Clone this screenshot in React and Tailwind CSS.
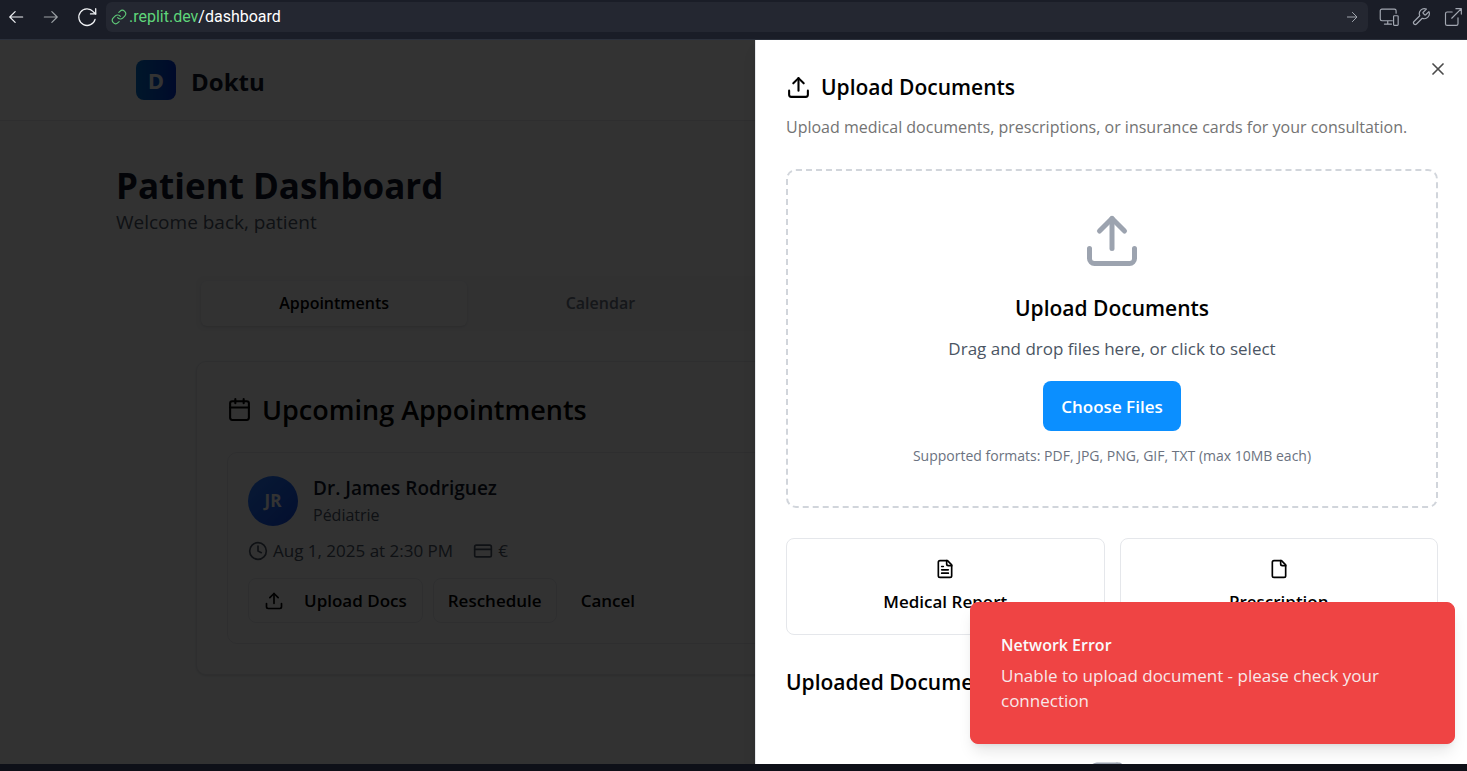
import React from "react";
import { Upload, Calendar, Clock, CreditCard, X } from "lucide-react";

function Glyph({ size = 20, strokeWidth = 2, className = "", children }) {
  return (
    <svg
      width={size}
      height={size}
      viewBox="0 0 24 24"
      fill="none"
      stroke="currentColor"
      strokeWidth={strokeWidth}
      strokeLinecap="round"
      strokeLinejoin="round"
      className={className}
      aria-hidden="true"
    >
      {children}
    </svg>
  );
}

function FileGlyph({ size, lines = false, className }) {
  return (
    <Glyph size={size} className={className}>
      <path d="M15 2H6a2 2 0 0 0-2 2v16a2 2 0 0 0 2 2h12a2 2 0 0 0 2-2V7Z" />
      <path d="M14 2v4a2 2 0 0 0 2 2h4" />
      {lines && <path d="M10 9H8M16 13H8M16 17H8" />}
    </Glyph>
  );
}

function BrowserBar() {
  return (
    <nav
      aria-label="Browser"
      className="flex h-10 shrink-0 items-start border-b border-[#2b303b] bg-[#1a1d27] pt-0.5 text-[#c2c8cc]"
    >
      <div className="flex h-[30px] items-center gap-[15px] pl-1.5">
        <button type="button" aria-label="Back" className="text-[#f0f2f5]">
          <Glyph strokeWidth={1.4}>
            <path d="M20 12H4.500M11 5.500 4.500 12l6.500 6.500" />
          </Glyph>
        </button>
        <button type="button" aria-label="Forward" className="text-[#9da2a6]">
          <Glyph strokeWidth={1.4}>
            <path d="M4 12h15.500M13 5.500l6.500 6.500-6.500 6.500" />
          </Glyph>
        </button>
        <button type="button" aria-label="Reload" className="text-[#f0f2f5]">
          <Glyph size={22} strokeWidth={1.4}>
            <path d="M20.800 14.500A9 9 0 1 1 18.800 6.200L21.500 8.700" />
            <path d="M21.500 3v5.700h-5.700" />
          </Glyph>
        </button>
      </div>
      <div className="ml-2 flex h-[30px] min-w-0 flex-1 items-center rounded-md bg-[#242731] pl-[5px] pr-1.5 font-['Roboto',sans-serif] text-[16px] leading-5">
        <Glyph size={16} strokeWidth={1.7} className="mr-0.5 text-[#5fc878]">
          <path d="M10 13a5 5 0 0 0 7.540.540l3-3a5 5 0 0 0-7.070-7.070l-1.720 1.710" />
          <path d="M14 11a5 5 0 0 0-7.540-.540l-3 3a5 5 0 0 0 7.070 7.070l1.710-1.710" />
        </Glyph>
        <span className="text-[#5fd57a]">.replit.dev</span>
        <span className="text-white">/dashboard</span>
        <button type="button" aria-label="Go" className="ml-auto text-[#a0a5ad]">
          <Glyph size={20} strokeWidth={1.2}>
            <path d="M6.500 12h11M12.500 6.500 18 12l-5.500 5.500" />
          </Glyph>
        </button>
      </div>
      <div className="flex h-[30px] items-center gap-3 pl-[11px] pr-1 text-[#a3a8b2]">
        <button type="button" aria-label="Device preview">
          <Glyph size={20} strokeWidth={1.4}>
            <path d="M20.500 7.500V4.500a2 2 0 0 0-2-2h-15a2 2 0 0 0-2 2v10a2 2 0 0 0 2 2H16M10.500 16.500v3.500M6.500 20.500H15" />
            <rect x="17.500" y="10.500" width="5.500" height="11.500" rx="1" />
          </Glyph>
        </button>
        <button type="button" aria-label="Developer tools">
          <Glyph size={20} strokeWidth={1.4}>
            <path d="M14.700 6.300a1 1 0 0 0 0 1.400l1.600 1.600a1 1 0 0 0 1.400 0l3.770-3.770a6 6 0 0 1-7.940 7.940l-6.910 6.910a2.120 2.120 0 0 1-3-3l6.910-6.910a6 6 0 0 1 7.940-7.940l-3.760 3.760z" />
          </Glyph>
        </button>
        <button type="button" aria-label="Open in new tab">
          <Glyph size={20} strokeWidth={1.4}>
            <path d="M18 13v7a2 2 0 0 1-2 2H5a2 2 0 0 1-2-2V8a2 2 0 0 1 2-2h6M15.500 2H22v6.500M10.500 13.500 22 2" />
          </Glyph>
        </button>
      </div>
    </nav>
  );
}

function Dashboard() {
  return (
    <div className="min-h-full bg-gray-50">
      <header className="border-b border-gray-200 bg-white">
        <div className="mx-auto flex h-20 max-w-[1195px] items-center gap-[15px]">
          <div className="flex h-10 w-10 items-center justify-center rounded-lg bg-gradient-to-r from-[#0070d0] to-[#0030d0] text-[22px] font-bold text-white">
            D
          </div>
          <span className="pt-1 text-[24px] font-bold leading-8 text-gray-900">Doktu</span>
        </div>
      </header>

      <main className="mx-auto max-w-[1235px] pt-[42px]">
        <h1 className="text-[35px] font-bold leading-[45px] text-gray-900">Patient Dashboard</h1>
        <p className="text-[19px] leading-7 text-gray-600">Welcome back, patient</p>

        <div className="mx-auto mt-10 max-w-[1075px]">
          <div role="tablist" className="grid grid-cols-4 rounded-lg bg-gray-100 p-[5px] text-[16px] font-semibold leading-[25px]">
            <button type="button" role="tab" aria-selected="true" className="rounded-md bg-gray-50 py-2.5 text-black shadow-sm">
              Appointments
            </button>
            <button type="button" role="tab" aria-selected="false" className="py-2.5 text-gray-500">
              Calendar
            </button>
          </div>

          <section className="mt-[30px] rounded-[10px] border border-gray-200 bg-gray-50 p-[30px] shadow-sm">
            <h2 className="flex items-center gap-2.5 text-[27px] font-semibold leading-[35px] text-black">
              <Calendar size={25} aria-hidden="true" />
              Upcoming Appointments
            </h2>

            <article className="mt-[25px] rounded-[10px] border border-gray-200 p-5">
              <div className="flex items-center gap-[15px]">
                <div className="flex h-[50px] w-[50px] items-center justify-center rounded-full bg-gradient-to-br from-blue-500 to-blue-700 text-[17px] font-bold text-white">
                  JR
                </div>
                <div>
                  <h3 className="text-[19px] font-semibold leading-[30px] text-gray-900">Dr. James Rodriguez</h3>
                  <p className="text-[16px] leading-[25px] text-gray-600">Pédiatrie</p>
                </div>
              </div>
              <div className="mt-2.5 flex items-center gap-5 text-[17px] leading-[25px] text-gray-600">
                <span className="flex items-center gap-[5px]">
                  <Clock size={20} aria-hidden="true" />
                  Aug 1, 2025 at 2:30 PM
                </span>
                <span className="flex items-center gap-[5px]">
                  <CreditCard size={20} aria-hidden="true" />€
                </span>
              </div>
              <div className="mt-[15px] flex gap-2.5 text-[17px] font-semibold leading-[25px] text-black">
                <button type="button" className="flex h-[45px] items-center gap-5 rounded-lg border border-gray-200 px-[15px]">
                  <Upload size={20} aria-hidden="true" />
                  Upload Docs
                </button>
                <button type="button" className="flex h-[45px] items-center rounded-lg border border-gray-200 px-[14px]">
                  Reschedule
                </button>
                <button type="button" className="flex h-[45px] items-center px-[14px]">
                  Cancel
                </button>
              </div>
            </article>
          </section>
        </div>
      </main>
    </div>
  );
}

function UploadPanel() {
  return (
    <aside
      role="dialog"
      aria-labelledby="panel-title"
      className="absolute inset-y-0 right-0 w-full max-w-[712px] overflow-hidden border-l border-gray-200 bg-white pl-[30px] pr-[29px] pt-8 shadow-lg"
    >
      <button type="button" aria-label="Close" className="absolute right-[19px] top-[19px] text-black opacity-70">
        <X size={20} aria-hidden="true" />
      </button>

      <h2 id="panel-title" className="flex items-center gap-2.5 text-[21px] font-semibold leading-[30px] text-black">
        <Upload size={25} aria-hidden="true" />
        Upload Documents
      </h2>
      <p className="mt-[13px] text-[16px] leading-[25px] text-[#737373]">
        Upload medical documents, prescriptions, or insurance cards for your consultation.
      </p>

      <div className="mt-[29px] flex flex-col items-center rounded-[10px] border-2 border-dashed border-[#d1d5db] p-10 text-center">
        <Upload size={60} className="text-[#9ca3af]" aria-hidden="true" />
        <h3 className="mt-5 text-[21px] font-semibold leading-[35px] text-black">Upload Documents</h3>
        <p className="mt-2.5 text-[17px] leading-[25px] text-[#4b5563]">Drag and drop files here, or click to select</p>
        <button
          type="button"
          className="mt-5 h-[50px] rounded-lg bg-[#0b8fff] px-[18px] text-[17px] font-semibold leading-[25px] text-white"
        >
          Choose Files
        </button>
        <p className="mt-[15px] text-[14px] leading-5 text-[#6b7280]">
          Supported formats: PDF, JPG, PNG, GIF, TXT (max 10MB each)
        </p>
      </div>

      <div className="mt-[30px] grid grid-cols-2 gap-[15px] text-[17px] font-semibold leading-[25px] text-black">
        <button type="button" className="flex flex-col items-center gap-2.5 rounded-lg border border-gray-200 py-5">
          <FileGlyph size={20} lines />
          Medical Report
        </button>
        <button type="button" className="flex flex-col items-center gap-2.5 rounded-lg border border-gray-200 py-5">
          <FileGlyph size={20} />
          Prescription
        </button>
      </div>

      <h3 className="mt-[30px] text-[21px] font-semibold leading-[35px] text-black">Uploaded Documents</h3>
      <div className="mt-[60px] flex justify-center">
        <FileGlyph size={60} className="text-[#9ca3af]" />
      </div>
    </aside>
  );
}

function Toast() {
  return (
    <div
      role="alert"
      className="absolute bottom-5 right-3 w-[485px] max-w-full rounded-lg border border-[#ef4444] bg-[#ef4444] p-[30px] text-[17px] leading-[25px] text-gray-50 shadow-lg"
    >
      <p className="text-[16px] font-semibold">Network Error</p>
      <p className="mt-[5px] opacity-90">Unable to upload document - please check your connection</p>
    </div>
  );
}

export default function App() {
  return (
    <div className="flex h-screen flex-col overflow-hidden bg-[#0e1018] pb-[7px] font-['Open_Sans','Noto_Sans',sans-serif]">
      <BrowserBar />
      <div className="relative min-h-0 flex-1 overflow-hidden">
        <Dashboard />
        <div className="absolute inset-0 bg-black/80" />
        <UploadPanel />
        <Toast />
      </div>
    </div>
  );
}
